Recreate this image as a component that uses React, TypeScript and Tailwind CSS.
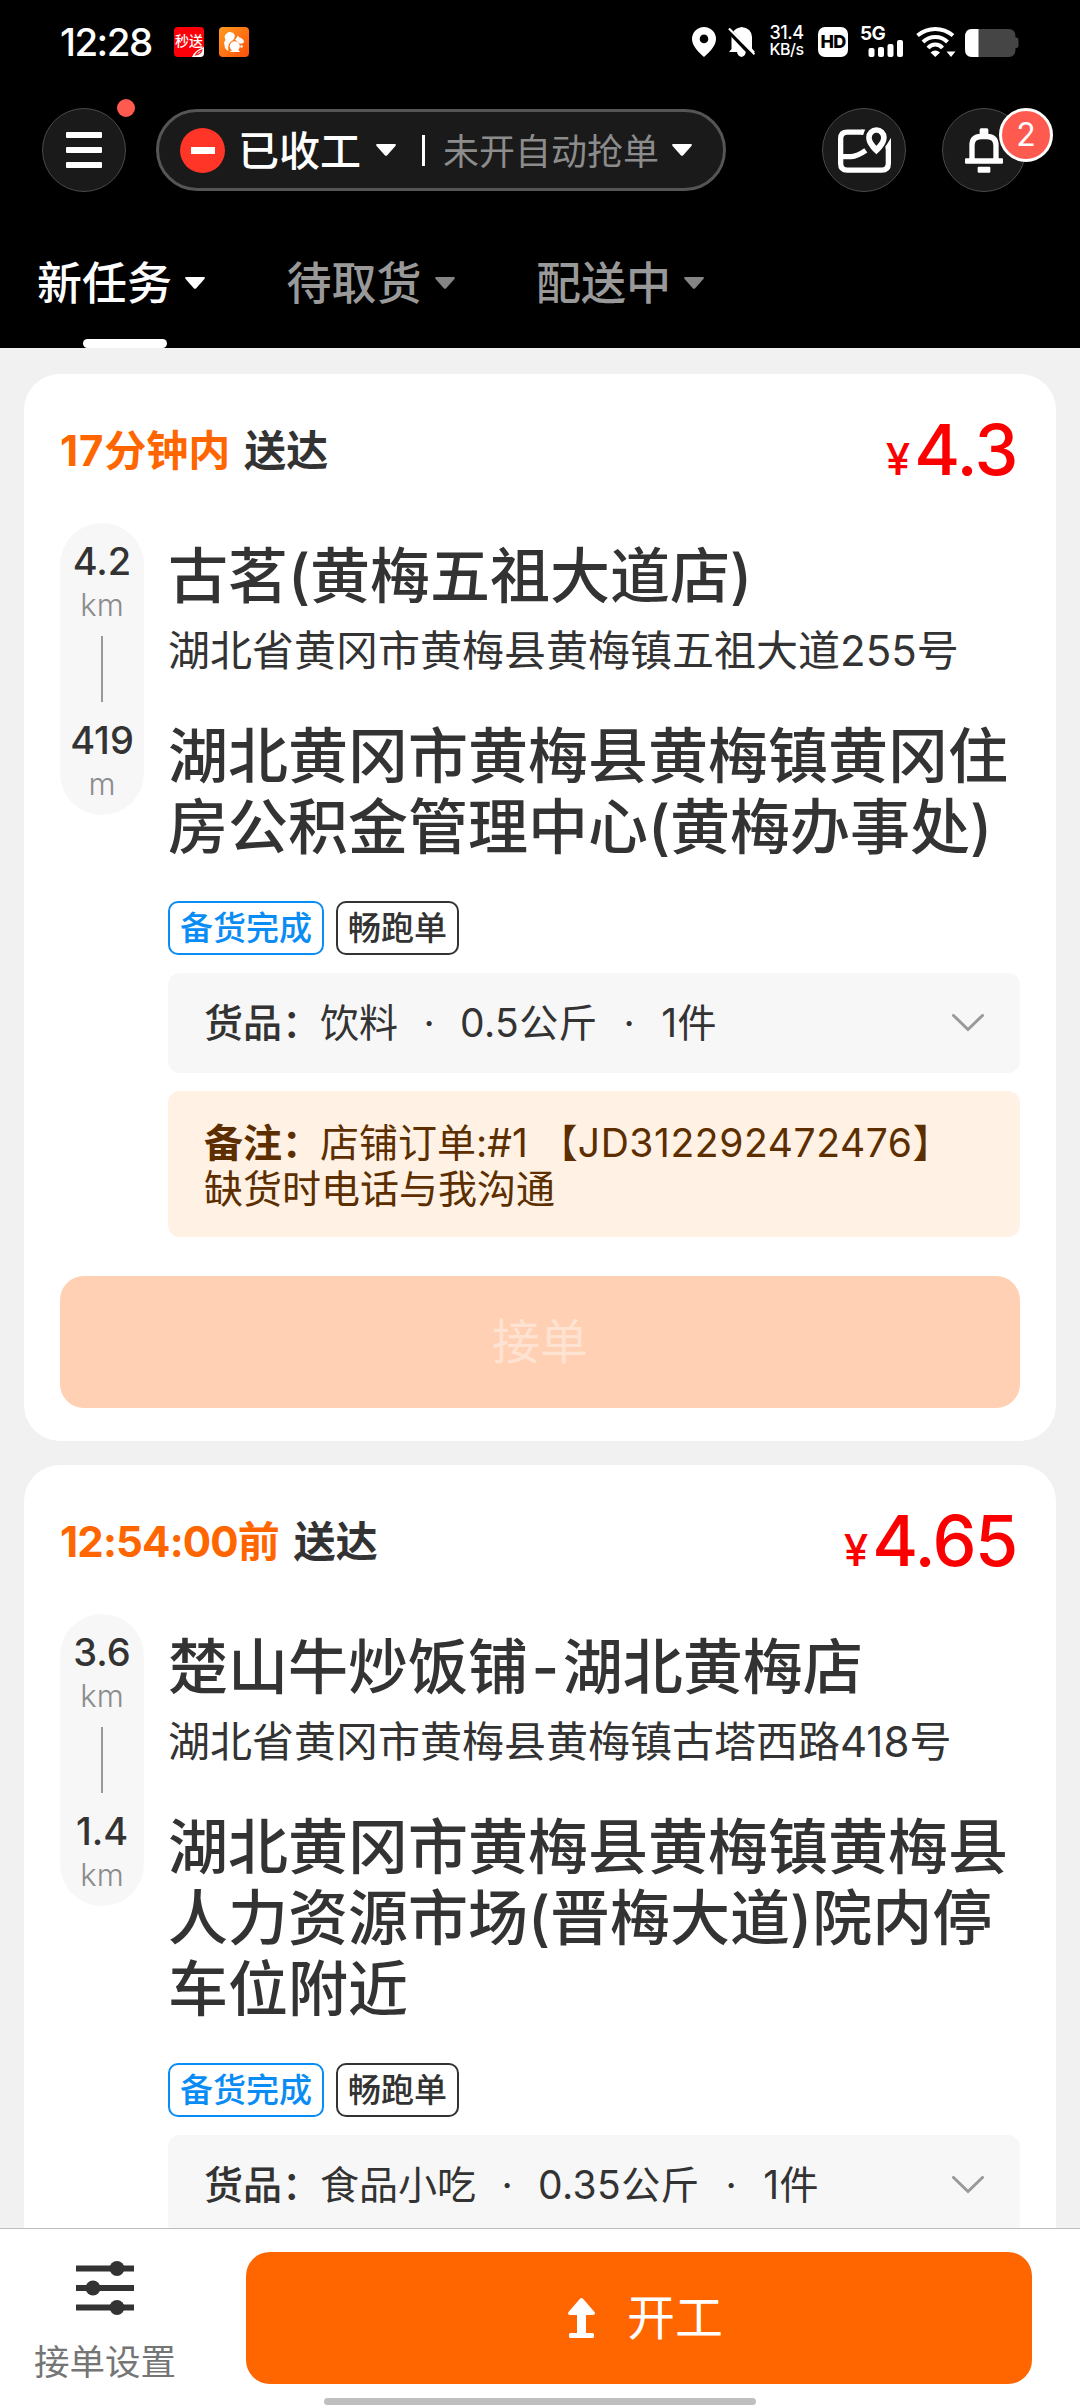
import React from "react";

const latinRuns = /([0-9A-Z.:]+)/;

/** Text whose latin and digit runs carry their own letter spacing beside the Chinese glyphs. */
function Rich({ children, tracking = "tracking-[0.01em]" }: { children: string; tracking?: string }) {
  return (
    <>
      {children.split(latinRuns).map((part, i) =>
        i % 2 === 1 ? (
          <span key={i} className={tracking}>
            {part}
          </span>
        ) : (
          part
        ),
      )}
    </>
  );
}

function Caret({ className = "" }: { className?: string }) {
  return (
    <svg viewBox="0 0 20 12" className={"h-3 w-5 shrink-0 " + className} fill="currentColor">
      <path d="M1.4 0H18.6Q20.8 .2 19.4 2L11.2 11.2Q10 12.4 8.8 11.2L.6 2Q-.8 .2 1.4 0Z" />
    </svg>
  );
}

function StatusBar() {
  return (
    <div className="flex h-[57px] items-end justify-between pr-[61px] pl-[60px] text-white">
      <div className="flex items-end">
        <span className="w-[114px] text-[38.5px] leading-[30px] font-medium tracking-[-0.04em]">12:28</span>
        <div className="relative flex h-[30px] w-[30px] items-center justify-center overflow-hidden rounded-[4px] bg-[#fb0008]">
          <span className="-mt-0.5 text-[14px] leading-none font-medium whitespace-nowrap">秒送</span>
          <svg viewBox="0 0 12 10" className="absolute right-0 bottom-0 h-[10px] w-3">
            <path d="M0 10Q3 3 12 0V10Z" fill="#fff" />
            <path d="M3.5 8Q6 4 10 3Q9 7 3.5 8Z" fill="none" stroke="#e22" strokeWidth="1.1" />
          </svg>
        </div>
        <svg viewBox="0 0 30 30" className="ml-[15px] h-[30px] w-[30px]">
          <defs>
            <linearGradient id="squirrel" x1="0" y1="0" x2="1" y2="1">
              <stop offset="0" stopColor="#ff9a1f" />
              <stop offset="1" stopColor="#ff4f0a" />
            </linearGradient>
          </defs>
          <rect width="30" height="30" rx="4" fill="url(#squirrel)" />
          <path
            d="M9.500 24Q5.500 22 5.600 18.500Q4.300 15.500 6.500 13Q4.500 9.500 7 7Q9 4.500 12 5.200Q16 6 15.800 9.500Q15.500 12 13.500 13.500Q9.500 16 9.300 19.500Q9 22 9.500 24Z"
            fill="#fff"
          />
          <path d="M16 12.500Q18 11 18.800 8.500L20.500 10.500Q25 12 25 15Q24 17.300 20.500 16.600Q17.500 14 16 12.500Z" fill="#fff" />
          <circle cx="15.800" cy="19.300" r="5" fill="#fff" />
          <path d="M10.500 25L14 22.500H19L21 25Z" fill="#fff" />
          <circle cx="22.500" cy="19.500" r="1.200" fill="#fff" />
        </svg>
      </div>

      <div className="flex items-end">
        <svg viewBox="0 0 24 30" className="h-[30px] w-6">
          <path d="M12 0A12 12 0 0 1 24 12C24 19 17 25.500 12 30C7 25.500 0 19 0 12A12 12 0 0 1 12 0ZM12 7.600A4.300 4.300 0 1 0 12 16.200A4.300 4.300 0 1 0 12 7.600Z" fill="#fff" fillRule="evenodd" />
        </svg>
        <svg viewBox="0 0 27 30" className="ml-3 h-[30px] w-[27px]">
          <path d="M3.500 22V10Q4 1.500 13.500 0Q23.500 1 24 10V21.500L27 25H17.800Q17.500 29 13.500 30Q9.500 29 9 25H1Z" fill="#fff" />
          <path d="M-1 1.500L26 30" stroke="#000" strokeWidth="5" />
          <path d="M1 1.500L26.500 27.300" stroke="#fff" strokeWidth="2.200" />
        </svg>
        <div className="ml-[13px] flex h-[32px] w-[37px] flex-col items-center font-medium tracking-[-0.03em]">
          <span className="block h-4 text-[18px] leading-[16px]">31.4</span>
          <span className="block h-4 text-[16px] leading-[17px]">KB/s</span>
        </div>
        <div className="ml-[13px] flex h-[30px] w-[30px] items-center justify-center rounded-[7px] bg-white text-[18px] leading-none font-extrabold tracking-[-0.04em] text-black">
          HD
        </div>
        <div className="relative ml-3 h-[30px] w-11">
          <span className="absolute -top-px left-0 text-[19px] leading-4 font-bold tracking-[-0.04em]">5G</span>
          <svg viewBox="0 0 36 17" className="absolute right-0 bottom-0 h-[17px] w-9" fill="#fff">
            <rect x="0.500" y="8" width="6" height="9" rx="2" />
            <rect x="10" y="7" width="6" height="10" rx="2" />
            <rect x="19.500" y="4" width="6" height="13" rx="2" />
            <rect x="29" y="0" width="6" height="17" rx="2" />
          </svg>
        </div>
        <svg viewBox="0 0 40 30" className="ml-3 h-[30px] w-10" fill="none" stroke="#fff" strokeWidth="4">
          <path d="M1.500 8.500Q9.500 2 19.300 2T37 8.500" />
          <path d="M7 15Q12 10 19.300 10T31.500 15" />
          <path d="M12 21Q15 17.600 19.300 17.600T26.500 21" />
          <path d="M14.500 25.500Q19.300 21.500 24 25.500L19.300 30Z" fill="#fff" stroke="none" />
          <path d="M30.500 24.500H39.500L35 30Z" fill="#fff" stroke="none" />
        </svg>
        <svg viewBox="0 0 54 28" className="ml-[9px] h-[28px] w-[54px]">
          <path d="M7 0H44Q50 0 50.500 7V8.500H51.500Q53.500 8.500 53.500 11V17Q53.500 19 51.500 19H50.500V21Q50 28 44 28H7Q0 28 0 20V8Q0 0 7 0Z" fill="#454545" />
          <path d="M7 0H13.500V28H7Q0 28 0 20V8Q0 0 7 0Z" fill="#fff" />
        </svg>
      </div>
    </div>
  );
}

const roundButton =
  "relative flex h-[84px] w-[84px] items-center justify-center rounded-full border border-[#4a4a4a] bg-[#1a1a1a] text-white";

function TopBar() {
  return (
    <div className="mt-[51px] flex h-[84px] items-center px-[42px]">
      <button className={roundButton}>
        <span className="flex flex-col gap-[9px]">
          <span className="h-1.5 w-9 rounded-[1px] bg-white" />
          <span className="h-1.5 w-9 rounded-[1px] bg-white" />
          <span className="h-1.5 w-9 rounded-[1px] bg-white" />
        </span>
        <span className="absolute -top-[10px] left-[74px] h-[18px] w-[18px] rounded-full bg-[#ff5a50]" />
      </button>

      <div className="ml-[30px] flex h-[82px] w-[570px] items-center rounded-full border-[3px] border-[#555] bg-[#1a1a1a] pl-[21px] text-white">
        <span className="flex h-[45px] w-[45px] items-center justify-center rounded-full bg-[#ff3528]">
          <span className="h-[7px] w-6 bg-white" />
        </span>
        <span className="ml-[13px] w-[125px] pt-0.5 text-[41px] leading-[60px] font-medium whitespace-nowrap">已收工</span>
        <Caret className="ml-[13px]" />
        <span className="ml-[26px] h-[31px] w-[3px] bg-white" />
        <span className="ml-[18px] w-[216px] pt-[3px] text-[36px] leading-[60px] whitespace-nowrap text-[#8c8c8c]">未开自动抢单</span>
        <Caret className="ml-[13px]" />
      </div>

      <button className={roundButton + " ml-24"}>
        <svg viewBox="0 0 160 138" className="h-[46px] w-[53px]" fill="none" stroke="#fff" strokeWidth="16">
          <path d="M76 15H28Q8 15 8 35V110Q8 130 28 130H132Q152 130 152 110V56" />
          <path d="M160 32V66H144V58Z" fill="#fff" stroke="none" />
          <path d="M72 7H82L76 23H70Z" fill="#fff" stroke="none" />
          <path d="M8 89H40Q58 88 84 70" />
          <path d="M116 0A31 31 0 0 1 147 31C147 50 131 68 116 82C101 68 85 50 85 31A31 31 0 0 1 116 0ZM116 17A14 14 0 0 0 102 31C102 40 110 50 116 56C122 50 130 40 130 31A14 14 0 0 0 116 17Z" fill="#fff" fillRule="evenodd" stroke="none" />
        </svg>
      </button>

      <button className={roundButton + " ml-9"}>
        <svg viewBox="0 0 114 134" className="h-[45px] w-[38px]" fill="#fff">
          <path d="M48 0H66Q70 0 70 6V24H44V6Q44 0 48 0Z" />
          <path d="M21 98V52Q21 25 48 25H66Q93 25 93 52V98" fill="none" stroke="#fff" strokeWidth="16" />
          <rect x="0" y="90" width="114" height="17" rx="3" />
          <rect x="38" y="116" width="38" height="18" rx="3" />
        </svg>
        <span className="absolute -top-px left-[56px] flex h-[54px] w-[54px] items-center justify-center rounded-full border-[3px] border-white bg-[#ff5a50] text-[32px] leading-none">
          2
        </span>
      </button>
    </div>
  );
}

function Tab({ label, active = false }: { label: string; active?: boolean }) {
  return (
    <div className={"relative flex h-[129px] w-[249.500px] items-center " + (active ? "text-white" : "text-[#999]")}>
      <span className="text-[45px] leading-[60px] font-medium whitespace-nowrap">{label}</span>
      <Caret className={active ? "-mt-[2px] ml-[13px] text-white" : "-mt-[2px] ml-[13px] text-[#858585]"} />
      {active && <span className="absolute bottom-0 left-[46px] h-[9px] w-[84px] rounded-full bg-white" />}
    </div>
  );
}

interface Leg {
  value: string;
  unit: string;
}

function Distance({ value, unit }: Leg) {
  return (
    <>
      <span className="h-12 text-[38px] leading-[49px] font-medium">{value}</span>
      <span className="mt-[2px] h-9 text-[31px] leading-9 font-light text-[#8c8c8c]">{unit}</span>
    </>
  );
}

interface Order {
  deadline: React.ReactNode;
  price: string;
  legs: [Leg, Leg];
  shop: string;
  shopAddress: string;
  destination: string[];
  goods: [string, string, string];
}

function OrderCard({ order, children }: { order: Order; children?: React.ReactNode }) {
  return (
    <section className="shrink-0 rounded-[36px] bg-white px-9 pt-[41px] pb-[33px] text-[#333]">
      <div className="flex h-[72px] items-center justify-between">
        <div className="flex gap-[14px] text-[42px] leading-[60px] font-bold">
          <span className="text-[#ff6600]">{order.deadline}</span>
          <span>送达</span>
        </div>
        <div className="flex items-baseline pt-1.5 pr-[3px] font-medium text-[#fa0000]">
          <span className="mr-[4px] text-[44px] leading-[72px]">¥</span>
          <span className="text-[70px] leading-[72px] tracking-[-0.02em]">{order.price}</span>
        </div>
      </div>

      <div className="flex items-start">
        <div className="mt-9 flex h-[292px] w-[84px] flex-col items-center rounded-full bg-[#f7f7f7] pt-[14px]">
          <Distance {...order.legs[0]} />
          <span className="mt-[13px] mb-[14px] h-[66px] w-0.5 bg-[#999]" />
          <Distance {...order.legs[1]} />
        </div>

        <div className="mt-[54px] ml-6 w-[852px]">
          <h2 className="text-[60px] leading-[71px] font-medium whitespace-nowrap">
            {order.shop.split(/(-)/).map((part, i) =>
              part === "-" ? (
                <span key={i} className="px-[3.500px]">
                  -
                </span>
              ) : (
                part
              ),
            )}
          </h2>
          <p className="mt-[9px] text-[42px] leading-[60px] whitespace-nowrap">
            <Rich tracking="tracking-[0em]">{order.shopAddress}</Rich>
          </p>
          <h2 className="mt-10 text-[60px] leading-[71px] font-medium whitespace-nowrap">
            {order.destination.map((line) => (
              <span key={line} className="block">
                {line}
              </span>
            ))}
          </h2>
          <div className="mt-[38px] flex h-[54px] gap-3 text-[33px] leading-[50px] font-medium">
            <span className="rounded-[10px] border-2 border-[#0a8cf5] px-[10px] text-[#0a8cf5]">备货完成</span>
            <span className="rounded-[10px] border-2 border-[#333] px-[10px]">畅跑单</span>
          </div>
          <div className="mt-[18px] flex h-[100px] items-center rounded-xl bg-[#f7f7f7] px-9 text-[39px] leading-[60px]">
            <span className="w-[116px] font-medium whitespace-nowrap">货品：</span>
            <span className="whitespace-nowrap">
              <Rich>{order.goods[0]}</Rich>
            </span>
            <span className="w-[62px] text-center">·</span>
            <span className="whitespace-nowrap">
              <Rich>{order.goods[1]}</Rich>
            </span>
            <span className="w-[64px] text-center">·</span>
            <span className="whitespace-nowrap">
              <Rich>{order.goods[2]}</Rich>
            </span>
            <svg viewBox="0 0 32 18" className="ml-auto h-[18px] w-8" fill="none" stroke="#999" strokeWidth="3">
              <path d="M1.500 1.500L16 15.500L30.500 1.500" strokeLinecap="round" />
            </svg>
          </div>
          {children}
        </div>
      </div>
    </section>
  );
}

const nearby: Order = {
  deadline: <Rich tracking="tracking-[0.02em]">17分钟内</Rich>,
  price: "4.3",
  legs: [
    { value: "4.2", unit: "km" },
    { value: "419", unit: "m" },
  ],
  shop: "古茗(黄梅五祖大道店)",
  shopAddress: "湖北省黄冈市黄梅县黄梅镇五祖大道255号",
  destination: ["湖北黄冈市黄梅县黄梅镇黄冈住", "房公积金管理中心(黄梅办事处)"],
  goods: ["饮料", "0.5公斤", "1件"],
};

const later: Order = {
  deadline: <Rich tracking="tracking-[-0.02em]">12:54:00前</Rich>,
  price: "4.65",
  legs: [
    { value: "3.6", unit: "km" },
    { value: "1.4", unit: "km" },
  ],
  shop: "楚山牛炒饭铺-湖北黄梅店",
  shopAddress: "湖北省黄冈市黄梅县黄梅镇古塔西路418号",
  destination: ["湖北黄冈市黄梅县黄梅镇黄梅县", "人力资源市场(晋梅大道)院内停", "车位附近"],
  goods: ["食品小吃", "0.35公斤", "1件"],
};

function ActionBar() {
  return (
    <footer className="relative flex h-[180px] shrink-0 items-start border-t border-[#bdbdbd] bg-white">
      <div className="flex w-[210px] flex-col items-center pt-[32px]">
        <svg viewBox="0 0 58 54" className="h-[54px] w-[58px]" fill="#333">
          <rect x="0" y="4.500" width="58" height="6" />
          <rect x="0" y="24" width="58" height="6" />
          <rect x="0" y="43.500" width="58" height="6" />
          <circle cx="41" cy="7.500" r="7.500" />
          <circle cx="17" cy="27" r="7.500" />
          <circle cx="41" cy="46.500" r="7.500" />
        </svg>
        <span className="mt-6 text-[35.500px] leading-[48px] text-[#757575]">接单设置</span>
      </div>
      <button className="mt-[23px] ml-9 flex h-[132px] w-[786px] items-center justify-center rounded-3xl bg-[#ff6600] pl-[13px] text-white">
        <svg viewBox="0 0 27 40" className="mr-[32px] h-10 w-[27px]" fill="#fff">
          <path d="M12 .8Q13.500 -.6 15 .8L26.500 14Q28 16.500 25 17H18V35H24.500Q26 35 26 36.500V38.500Q26 40 24.500 40H2.500Q1 40 1 38.500V36.500Q1 35 2.500 35H9V17H2Q-1 16.500 .5 14Z" />
        </svg>
        <span className="text-[48px] leading-[60px]">开工</span>
      </button>
      <span className="absolute bottom-[3px] left-[324px] h-[7px] w-[432px] rounded-full bg-[#bfbfbf]" />
    </footer>
  );
}

export default function App() {
  return (
    <div
      lang="zh-CN"
      className="flex h-[2408px] w-[1080px] flex-col overflow-hidden bg-[#f1f1f1] font-['Inter','Noto_Sans_CJK_SC',sans-serif]"
    >
      <header className="flex h-[348px] shrink-0 flex-col bg-black">
        <StatusBar />
        <TopBar />
        <nav className="mt-auto flex pl-[37px]">
          <Tab label="新任务" active />
          <Tab label="待取货" />
          <Tab label="配送中" />
        </nav>
      </header>

      <main className="flex min-h-0 flex-1 flex-col gap-6 overflow-hidden px-6 pt-[26px]">
        <OrderCard order={nearby}>
          <p className="mt-[18px] h-[146px] rounded-xl bg-[#fff1e3] px-9 pt-[29px] text-[39px] leading-[46px] whitespace-nowrap text-[#5c2e00]">
            <b className="inline-block w-[116px] font-bold">备注：</b>
            店铺订单:#1 【<Rich tracking="tracking-[0.015em]">JD312292472476</Rich>】
            <br />
            缺货时电话与我沟通
          </p>
          <button className="mt-[39px] -ml-[108px] block h-[132px] w-[960px] rounded-3xl bg-[#ffd0b3] text-[48px] leading-[132px] text-[#ffe3d2]">
            接单
          </button>
        </OrderCard>
        <OrderCard order={later} />
      </main>

      <ActionBar />
    </div>
  );
}
